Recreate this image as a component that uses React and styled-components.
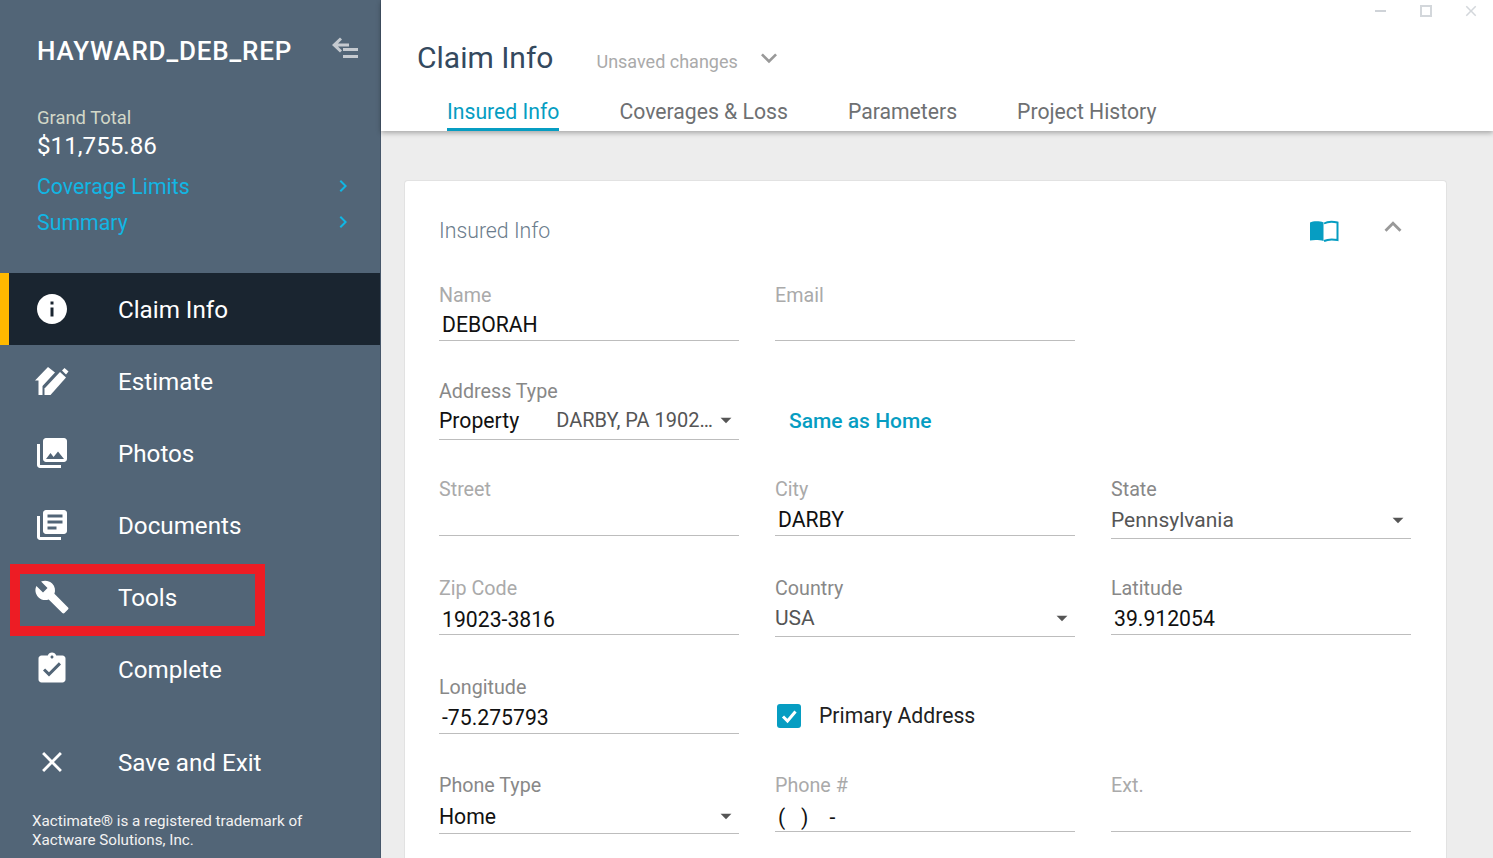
import React from "react";
import styled, { createGlobalStyle } from "styled-components";
import {
  MdInfo,
  MdPhotoLibrary,
  MdLibraryBooks,
  MdBuild,
  MdAssignmentTurnedIn,
  MdClose,
  MdChevronRight,
  MdKeyboardArrowDown,
  MdKeyboardArrowUp,
  MdArrowDropDown,
} from "react-icons/md";

const GlobalStyle = createGlobalStyle`
  html, body {
    margin: 0;
    height: 100%;
    overflow: hidden;
    font-family: Roboto, "Liberation Sans", sans-serif;
  }
  * { box-sizing: border-box; }
`;

function EstimateIcon() {
  return (
    <svg width="34" height="30" viewBox="0 0 34 30" fill="currentColor">
      <path d="M0 14.500 13 1l7 5.500L7.500 20v9H3.500V14.500z" />
      <path d="M9.500 29v-6.500L25 6l6 5.500L15.500 29z" />
      <path d="M27 4.500 29.500 2l4 3.500L31 8.500z" />
    </svg>
  );
}

function CollapseIcon() {
  return (
    <svg width="28" height="26" viewBox="0 0 28 26" fill="#c5cad0">
      <path d="M1 9 9 1.500l2 2-4 4h11v3H7l4 4-2 2z" />
      <rect x="12" y="12" width="15" height="3" />
      <rect x="12" y="19" width="15" height="3" />
    </svg>
  );
}

function BookIcon() {
  return (
    <svg width="30" height="22" viewBox="0 0 30 22">
      <path d="M1 2.500C4 1.200 10 .8 14.500 2.500V21c-4-1.300-10-1.300-13.500-.5z" fill="#069dc2" />
      <path
        d="M15 3.500C18 1.800 24 1.500 28.500 2.500V20c-4-.8-10-.7-13.500 1"
        fill="none"
        stroke="#069dc2"
        strokeWidth="2"
      />
    </svg>
  );
}

function CheckIcon() {
  return (
    <svg width="18" height="18" viewBox="0 0 18 18" fill="none" stroke="#fff" strokeWidth="3">
      <path d="M3 9.500 7.500 14 15.500 4.500" />
    </svg>
  );
}

const navItems = [
  { label: "Claim Info", icon: <MdInfo size={36} />, active: true },
  { label: "Estimate", icon: <EstimateIcon /> },
  { label: "Photos", icon: <MdPhotoLibrary size={36} /> },
  { label: "Documents", icon: <MdLibraryBooks size={36} /> },
  { label: "Tools", icon: <MdBuild size={38} />, marked: true },
  { label: "Complete", icon: <MdAssignmentTurnedIn size={36} /> },
];

export default function App() {
  return (
    <Page>
      <GlobalStyle />
      <Sidebar>
        <SideHead>
          <Job>HAYWARD_DEB_REP</Job>
          <CollapseIcon />
        </SideHead>
        <TotalLabel>Grand Total</TotalLabel>
        <TotalValue>$11,755.86</TotalValue>
        <SideLinks>
          <SideLink>
            Coverage Limits <MdChevronRight size={24} />
          </SideLink>
          <SideLink>
            Summary <MdChevronRight size={24} />
          </SideLink>
        </SideLinks>
        <Nav>
          {navItems.map(({ label, icon, active, marked }) => (
            <NavItem key={label} $active={active} $marked={marked}>
              <NavIcon $active={active}>{icon}</NavIcon>
              {label}
            </NavItem>
          ))}
        </Nav>
        <ExitItem>
          <NavIcon>
            <MdClose size={34} />
          </NavIcon>
          Save and Exit
        </ExitItem>
        <Trademark>
          Xactimate® is a registered trademark of
          <br />
          Xactware Solutions, Inc.
        </Trademark>
      </Sidebar>
      <Main>
        <Header>
          <WindowControls>
            <Minimize />
            <Maximize />
            <MdClose size={18} color="#d3d7db" />
          </WindowControls>
          <TitleRow>
            <Title>Claim Info</Title>
            <Unsaved>Unsaved changes</Unsaved>
            <MdKeyboardArrowDown size={32} color="#999" />
          </TitleRow>
          <Tabs>
            <Tab $active>Insured Info</Tab>
            <Tab>Coverages &amp; Loss</Tab>
            <Tab>Parameters</Tab>
            <Tab>Project History</Tab>
          </Tabs>
        </Header>
        <Content>
          <Card>
            <CardHead>
              <CardTitle>Insured Info</CardTitle>
              <CardActions>
                <BookIcon />
                <MdKeyboardArrowUp size={34} color="#999" />
              </CardActions>
            </CardHead>
            <FormRow $height={96}>
              <Field label="Name" value="DEBORAH" />
              <Field label="Email" />
            </FormRow>
            <FormRow $height={98}>
              <Field label="Address Type" dark height={37} lift={2}>
                <span>Property</span>
                <AddressText>DARBY, PA 1902…</AddressText>
                <MdArrowDropDown size={26} color="#555" />
              </Field>
              <SameAsHome>Same as Home</SameAsHome>
            </FormRow>
            <FormRow $height={99}>
              <Field label="Street" height={35} />
              <Field label="City" value="DARBY" height={35} pad={7} />
              <Field label="State" dark height={38}>
                <SoftValue>Pennsylvania</SoftValue>
                <MdArrowDropDown size={26} color="#555" />
              </Field>
            </FormRow>
            <FormRow $height={99}>
              <Field label="Zip Code" value="19023-3816" height={35} pad={8} />
              <Field label="Country" dark height={37}>
                <SoftValue>USA</SoftValue>
                <MdArrowDropDown size={26} color="#555" />
              </Field>
              <Field label="Latitude" dark value="39.912054" height={35} pad={7} />
            </FormRow>
            <FormRow $height={98}>
              <Field label="Longitude" dark value="-75.275793" height={35} pad={7} />
              <CheckRow>
                <CheckBox>
                  <CheckIcon />
                </CheckBox>
                Primary Address
              </CheckRow>
            </FormRow>
            <FormRow $height={90}>
              <Field label="Phone Type" dark height={37} pad={2}>
                <span>Home</span>
                <MdArrowDropDown size={26} color="#555" />
              </Field>
              <Field label="Phone #" value="(   )    -" height={35} pad={9} />
              <Field label="Ext." height={35} />
            </FormRow>
          </Card>
        </Content>
      </Main>
    </Page>
  );
}

function Field({ label, value, dark, height, pad, lift, children }) {
  return (
    <FieldBox>
      <FieldLabel $dark={dark}>{label}</FieldLabel>
      {children ? (
        <SelectValue $height={height} $pad={pad} $lift={lift}>
          {children}
        </SelectValue>
      ) : (
        <InputValue $height={height} $pad={pad}>
          {value}
        </InputValue>
      )}
    </FieldBox>
  );
}

const Page = styled.div`
  display: flex;
  width: 1493px;
  height: 858px;
  overflow: hidden;
  background: #ededed;
`;

const Sidebar = styled.aside`
  width: 381px;
  flex-shrink: 0;
  display: flex;
  flex-direction: column;
  background: #526577;
  border-right: 1px solid #46576a;
  color: #fff;
`;

const SideHead = styled.div`
  display: flex;
  justify-content: space-between;
  align-items: center;
  height: 100px;
  padding: 2px 21px 0 37px;
  svg {
    margin-top: -4px;
  }
`;

const Job = styled.div`
  font-size: 26px;
  font-weight: 500;
  letter-spacing: 0.85px;
`;

const TotalLabel = styled.div`
  padding-left: 37px;
  margin-top: 6px;
  font-size: 18.400px;
  line-height: 23px;
  color: #d3d8c8;
`;

const TotalValue = styled.div`
  padding-left: 37px;
  margin-top: 1px;
  font-size: 24.200px;
  line-height: 32px;
`;

const SideLinks = styled.div`
  margin-top: 6px;
`;

const SideLink = styled.div`
  display: flex;
  justify-content: space-between;
  align-items: center;
  height: 36px;
  padding: 0 25px 0 37px;
  font-size: 21.300px;
  color: #11b6e4;
`;

const Nav = styled.nav`
  margin-top: 33px;
  display: flex;
  flex-direction: column;
`;

const NavItem = styled.div`
  position: relative;
  display: flex;
  align-items: center;
  height: 72px;
  padding-top: 1px;
  padding-left: ${(p) => (p.$active ? "109px" : "118px")};
  font-size: 24.200px;
  background: ${(p) => (p.$active ? "#1a2530" : "transparent")};
  border-left: ${(p) => (p.$active ? "9px solid #ffb900" : "none")};
  ${(p) =>
    p.$marked &&
    `
    &::after {
      content: "";
      box-sizing: border-box;
      position: absolute;
      left: 10px;
      top: 3px;
      width: 255px;
      height: 72px;
      border: 10px solid #ed1c24;
    }
  `}
`;

const NavIcon = styled.span`
  position: absolute;
  left: ${(p) => (p.$active ? "25px" : "34px")};
  top: 0;
  bottom: 0;
  width: 36px;
  display: flex;
  align-items: center;
  justify-content: center;
`;

const ExitItem = styled(NavItem)`
  margin-top: 21px;
`;

const Trademark = styled.div`
  padding-left: 32px;
  margin-top: 14px;
  font-size: 15.200px;
  line-height: 19px;
  color: #f2f2f2;
`;

const Main = styled.main`
  flex: 1;
  min-width: 0;
  display: flex;
  flex-direction: column;
`;

const Header = styled.header`
  height: 131px;
  flex-shrink: 0;
  background: #fff;
  box-shadow: 0 2px 5px rgba(0, 0, 0, 0.3);
  z-index: 1;
`;

const WindowControls = styled.div`
  display: flex;
  justify-content: flex-end;
  align-items: center;
  gap: 30px;
  height: 22px;
  padding-right: 13px;
`;

const Minimize = styled.span`
  width: 11px;
  height: 2px;
  margin-right: 4px;
  background: #cfd3d8;
`;

const Maximize = styled.span`
  width: 12px;
  height: 12px;
  border: 2px solid #d3d7db;
`;

const TitleRow = styled.div`
  display: flex;
  align-items: center;
  height: 70px;
  padding-left: 36px;
  svg {
    margin-top: 2px;
  }
`;

const Title = styled.h1`
  margin: 0 43px 0 0;
  font-size: 30px;
  font-weight: 400;
  color: #34495e;
`;

const Unsaved = styled.span`
  font-size: 18px;
  margin-right: 15px;
  margin-top: 8px;
  color: #aaa;
`;

const Tabs = styled.div`
  display: flex;
  gap: 60px;
  height: 39px;
  padding-left: 66px;
`;

const Tab = styled.div`
  padding-top: 7px;
  font-size: 21.200px;
  color: ${(p) => (p.$active ? "#069dc2" : "#6e7072")};
  border-bottom: 3px solid ${(p) => (p.$active ? "#069dc2" : "transparent")};
`;

const Content = styled.div`
  flex: 1;
  min-height: 0;
  padding: 49px 46px 0 23px;
`;

const Card = styled.section`
  height: 100%;
  padding: 0 35px 0 34px;
  background: #fff;
  border: 1px solid #e2e2e2;
  border-bottom: none;
  border-radius: 4px 4px 0 0;
`;

const CardHead = styled.div`
  display: flex;
  justify-content: space-between;
  align-items: center;
  height: 102px;
`;

const CardTitle = styled.h2`
  margin: 0 0 4px;
  font-size: 21.300px;
  font-weight: 300;
  color: #6b7c8c;
`;

const CardActions = styled.div`
  display: flex;
  align-items: center;
  gap: 37px;
  margin-right: 1px;
  svg:first-child {
    margin-top: -3px;
  }
  svg:last-child {
    margin-top: -11px;
  }
`;

const FormRow = styled.div`
  display: grid;
  grid-template-columns: repeat(3, 300px);
  column-gap: 36px;
  align-items: start;
  height: ${(p) => p.$height}px;
`;

const FieldBox = styled.div`
  display: flex;
  flex-direction: column;
`;

const FieldLabel = styled.label`
  height: 24px;
  padding-top: 1px;
  font-size: 19.700px;
  line-height: 24px;
  color: ${(p) => (p.$dark ? "#888" : "#aaa")};
`;

const InputValue = styled.div`
  height: ${(p) => p.$height || 34}px;
  padding: ${(p) => p.$pad || 6}px 0 0 3px;
  font-size: 21.200px;
  line-height: 24px;
  white-space: pre;
  color: #111;
  border-bottom: 1px solid #bdbdbd;
`;

const SelectValue = styled.div`
  display: flex;
  align-items: center;
  justify-content: space-between;
  height: ${(p) => p.$height || 34}px;
  padding-top: ${(p) => p.$pad || 0}px;
  padding-bottom: ${(p) => p.$lift || 0}px;
  font-size: 21.200px;
  color: #111;
  border-bottom: 1px solid #bdbdbd;
`;

const SoftValue = styled.span`
  font-size: 21px;
  color: #555;
`;

const AddressText = styled.span`
  flex: 1;
  margin-left: 37px;
  font-size: 20px;
  white-space: nowrap;
  color: #555;
`;

const SameAsHome = styled.a`
  margin: 30px 0 0 14px;
  font-size: 21px;
  font-weight: 500;
  color: #069dc2;
`;

const CheckRow = styled.div`
  display: flex;
  align-items: center;
  gap: 18px;
  margin: 28px 0 0 2px;
  font-size: 21.200px;
  color: #222;
`;

const CheckBox = styled.span`
  width: 24px;
  height: 24px;
  display: flex;
  align-items: center;
  justify-content: center;
  border-radius: 3px;
  background: #069dc2;
`;
